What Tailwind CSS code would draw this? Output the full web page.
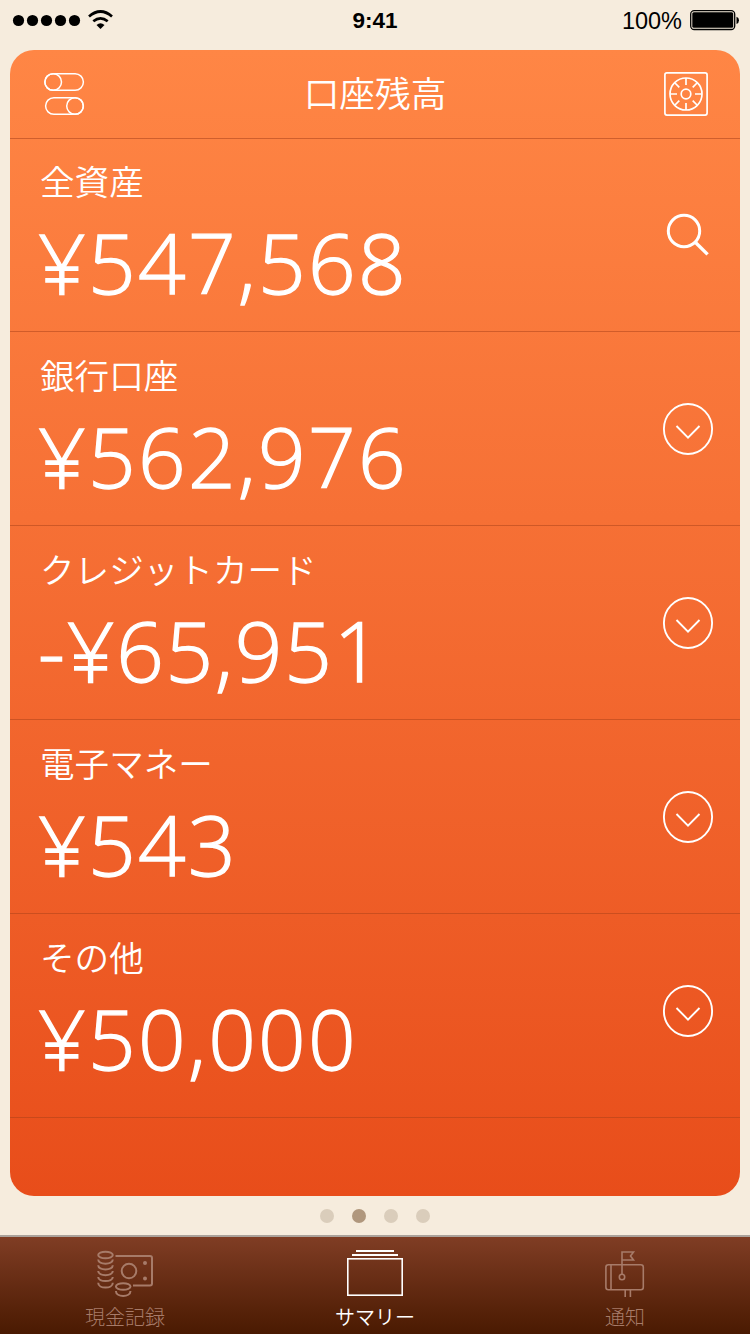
<!DOCTYPE html>
<html lang="ja">
<head>
<meta charset="utf-8">
<title>口座残高</title>
<script src="https://cdn.jsdelivr.net/npm/@tailwindcss/browser@4"></script>
</head>
<body class="w-[750px] h-[1334px] overflow-hidden bg-[#f6ecdd] flex flex-col font-['Noto_Sans_CJK_JP',sans-serif]">
<header class="h-[50px] shrink-0 grid grid-cols-3 px-3 text-black font-['Liberation_Sans',sans-serif] text-[24px] leading-[42px]">
  <div class="h-[42px] flex items-center">
    <svg class="w-[104px] h-[42px]" viewBox="12 0 104 42">
      <circle cx="18.5" cy="20.5" r="5.6"/><circle cx="32.5" cy="20.5" r="5.6"/><circle cx="46.5" cy="20.5" r="5.6"/><circle cx="60.5" cy="20.5" r="5.6"/><circle cx="74.5" cy="20.5" r="5.6"/>
      <path d="M89 16.500Q100.500 6.500 112 16.500M93.300 21.300Q100.500 15.500 107.700 21.300" fill="none" stroke="#000" stroke-width="2.700"/>
      <path d="M96.500 25Q100.500 21.500 104.500 25L100.500 29Z"/>
    </svg>
  </div>
  <div class="text-center font-bold text-[22.500px] h-[42px]">9:41</div>
  <div class="h-[42px] flex items-center justify-end gap-2">
    <span class="text-[23.500px]">100%</span>
    <svg class="w-[50px] h-[42px] -mr-[2px]" viewBox="690 0 50 42">
      <rect x="690.700" y="10.700" width="44" height="18.800" rx="3.500" fill="none" stroke="#000" stroke-width="1.300"/>
      <rect x="692.300" y="12.300" width="40.900" height="15.500" rx="1.500"/>
      <path d="M736.500 16.700Q739 17.500 739 20.300T736.500 24Z"/>
    </svg>
  </div>
</header>
<main class="mx-[10px] h-[1146px] shrink-0 rounded-[24px] overflow-hidden bg-linear-to-b from-[#ff8645] to-[#e84d1a] text-white flex flex-col">
  <div class="h-[89px] shrink-0 border-b border-[#b0481f]/60 flex items-center justify-between pl-[32px] pr-[30px]">
    <svg class="w-[44px] h-[46px]" viewBox="42 71 44 46" fill="none" stroke="#fff" stroke-width="1.500">
      <rect x="44.800" y="73.700" width="38.600" height="16.600" rx="8.300"/><circle cx="53.200" cy="82" r="8.300"/>
      <rect x="45.600" y="97.700" width="37.800" height="16.600" rx="8.300"/><circle cx="75" cy="106" r="8.300"/>
    </svg>
    <h1 class="text-[35.700px] leading-[84px] pb-[4px] pl-[2px] font-[350]">口座残高</h1>
    <svg class="w-[48px] h-[48px]" viewBox="662 70 48 48" fill="none" stroke="#fff" stroke-width="1.700">
      <rect x="664.900" y="72.900" width="42.200" height="42.200" rx="2"/><circle cx="686" cy="94" r="16"/><circle cx="686" cy="94" r="4.800"/>
      <path d="M686 78v7M686 103v7M670 94h7M695 94h7M675 83l4.300 4.300M692.700 100.700l4.300 4.300M697 83l-4.300 4.300M679.300 100.700l-4.300 4.300"/>
    </svg>
  </div>
  <section class="h-[193px] shrink-0 border-b border-[#a83f18]/50 flex justify-between pl-[30px] pr-[26px]">
    <div class="pt-[16px]"><h2 class="text-[34.600px] leading-[50px] font-[350]">全資産</h2><p class="mt-[7px] -ml-[2px] font-['Open_Sans',sans-serif] font-light text-[83.500px] leading-[100px] tracking-[2.300px] [-webkit-text-stroke:1.300px_white]">¥547,568</p></div>
    <svg class="mt-[70px] w-[52px] h-[54px]" viewBox="662 209 52 54" fill="none" stroke="#fff" stroke-width="3"><circle cx="684" cy="231" r="15.700"/><path d="M695 242l12.600 12.400" stroke-width="3.400"/></svg>
  </section>
  <section class="h-[194px] shrink-0 border-b border-[#a83f18]/50 flex justify-between pl-[30px] pr-[26px]">
    <div class="pt-[17px]"><h2 class="text-[34.600px] leading-[50px] font-[350]">銀行口座</h2><p class="mt-[7px] -ml-[2px] font-['Open_Sans',sans-serif] font-light text-[83.500px] leading-[100px] tracking-[2.300px] [-webkit-text-stroke:1.300px_white]">¥562,976</p></div>
    <svg class="mt-[70px] w-[52px] h-[54px]" viewBox="0 0 52 54" fill="none" stroke="#fff" stroke-width="1.900"><ellipse cx="26" cy="27" rx="24.100" ry="25"/><path d="M14.500 24L26 35.600L37.500 24"/></svg>
  </section>
  <section class="h-[194px] shrink-0 border-b border-[#a83f18]/50 flex justify-between pl-[30px] pr-[26px]">
    <div class="pt-[17px]"><h2 class="text-[34.600px] leading-[50px] font-[350]">クレジットカード</h2><p class="mt-[7px] -ml-[2px] font-['Open_Sans',sans-serif] font-light text-[83.500px] leading-[100px] tracking-[1.800px] [-webkit-text-stroke:1.300px_white]">-¥65,951</p></div>
    <svg class="mt-[70px] w-[52px] h-[54px]" viewBox="0 0 52 54" fill="none" stroke="#fff" stroke-width="1.900"><ellipse cx="26" cy="27" rx="24.100" ry="25"/><path d="M14.500 24L26 35.600L37.500 24"/></svg>
  </section>
  <section class="h-[194px] shrink-0 border-b border-[#a83f18]/50 flex justify-between pl-[30px] pr-[26px]">
    <div class="pt-[17px]"><h2 class="text-[34.600px] leading-[50px] font-[350]">電子マネー</h2><p class="mt-[7px] -ml-[2px] font-['Open_Sans',sans-serif] font-light text-[83.500px] leading-[100px] tracking-[2.300px] [-webkit-text-stroke:1.300px_white]">¥543</p></div>
    <svg class="mt-[70px] w-[52px] h-[54px]" viewBox="0 0 52 54" fill="none" stroke="#fff" stroke-width="1.900"><ellipse cx="26" cy="27" rx="24.100" ry="25"/><path d="M14.500 24L26 35.600L37.500 24"/></svg>
  </section>
  <section class="h-[204px] shrink-0 border-b border-[#a83f18]/50 flex justify-between pl-[30px] pr-[26px]">
    <div class="pt-[17px]"><h2 class="text-[34.600px] leading-[50px] font-[350]">その他</h2><p class="mt-[7px] -ml-[2px] font-['Open_Sans',sans-serif] font-light text-[83.500px] leading-[100px] tracking-[2.300px] [-webkit-text-stroke:1.300px_white]">¥50,000</p></div>
    <svg class="mt-[70px] w-[52px] h-[54px]" viewBox="0 0 52 54" fill="none" stroke="#fff" stroke-width="1.900"><ellipse cx="26" cy="27" rx="24.100" ry="25"/><path d="M14.500 24L26 35.600L37.500 24"/></svg>
  </section>
</main>
<div class="h-[39px] shrink-0 pt-[13px] flex justify-center gap-[18px]">
  <i class="size-[14px] rounded-full bg-[#dacdbb]"></i><i class="size-[14px] rounded-full bg-[#b0977d]"></i><i class="size-[14px] rounded-full bg-[#dacdbb]"></i><i class="size-[14px] rounded-full bg-[#dacdbb]"></i>
</div>
<nav class="h-[99px] shrink-0 border-t-2 border-[#aaa29b] bg-linear-to-b from-[#803d24] to-[#4a1a02] grid grid-cols-3 text-[20px] leading-[28px] font-light text-[#a77b69]">
  <a class="flex flex-col items-center pt-[10px]">
    <svg class="w-[60px] h-[56px]" viewBox="95 1247 60 56" fill="none" stroke="#a77b69" stroke-width="2">
      <ellipse cx="105.500" cy="1255" rx="7.300" ry="3.300"/>
      <path d="M98.200 1259.500c0 5.500 14.600 5.500 14.600 0M98.200 1265.300c0 5.500 14.600 5.500 14.600 0M98.200 1271.100c0 5.500 14.600 5.500 14.600 0M98.200 1276.900c0 5.500 14.600 5.500 14.600 0M98.200 1282.700c0 6.500 14.600 6.500 14.600 0"/>
      <path d="M115.500 1256h34.500q2 0 2 2v25.500q0 2-2 2h-17"/>
      <circle cx="129" cy="1271" r="7.300"/><circle cx="145" cy="1263" r="2" fill="#a77b69" stroke="none"/><circle cx="145" cy="1278.500" r="2" fill="#a77b69" stroke="none"/>
      <ellipse cx="123.200" cy="1286.500" rx="7.300" ry="3.300"/><path d="M115.900 1291c0 6.500 14.600 6.500 14.600 0"/>
    </svg>
    <span>現金記録</span>
  </a>
  <a class="flex flex-col items-center pt-[10px] text-white">
    <svg class="w-[60px] h-[56px]" viewBox="345 1247 60 56" fill="none" stroke="#fff"><path d="M356 1251h38M352 1255h46" stroke-width="2"/><rect x="347.800" y="1258.800" width="54.400" height="36.400" stroke-width="1.600"/></svg>
    <span class="font-[350]">サマリー</span>
  </a>
  <a class="flex flex-col items-center pt-[10px]">
    <svg class="w-[60px] h-[56px]" viewBox="595 1247 60 56" fill="none" stroke="#a77b69" stroke-width="1.600"><rect x="605.900" y="1264.800" width="37.400" height="24.900" rx="2.500"/><path d="M611 1265v25M622 1274V1252h11.500l-3 4 3 4H622M625.200 1290v7M630.400 1290v7"/><circle cx="622" cy="1277" r="2.700"/></svg>
    <span>通知</span>
  </a>
</nav>
</body>
</html>
